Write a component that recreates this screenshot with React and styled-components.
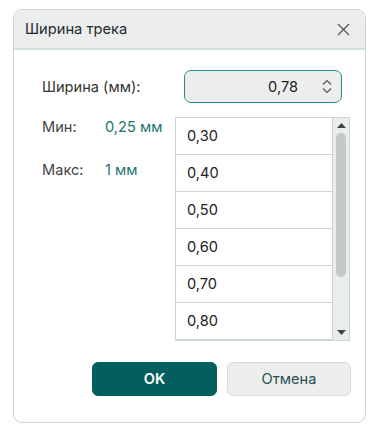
import React from "react";
import styled, { createGlobalStyle } from "styled-components";

const Global = createGlobalStyle`
  html, body { margin: 0; padding: 0; background: #ffffff; }
  body { font-family: Inter, "Noto Sans", "Liberation Sans", sans-serif; color: #2b2b2b; }
  * { box-sizing: border-box; }
`;

const Dialog = styled.div`
  margin: 9px 0 0 13px;
  width: 353px;
  height: 414px;
  border: 1px solid #cfd3d3;
  border-radius: 9px;
  background: #fff;
  display: flex;
  flex-direction: column;
  overflow: hidden;
`;

const Header = styled.div`
  height: 40px;
  flex: none;
  background: #eceeee;
  border-bottom: 2px solid #d3dfdd;
  display: flex;
  align-items: center;
  justify-content: space-between;
  padding: 0 14px 0 11px;
`;

const Title = styled.div`
  font-size: 14.7px;
  color: #1e2a2a;
`;

const Close = styled.button`
  border: 0;
  background: transparent;
  padding: 0;
  width: 16px;
  height: 16px;
  display: flex;
  align-items: center;
  justify-content: center;
  color: #555;
`;

const Body = styled.div`
  padding: 20px 14px 0 28px;
  display: flex;
  flex-direction: column;
`;

const WidthRow = styled.div`
  display: flex;
  align-items: center;
  height: 33px;
`;

const Label = styled.div`
  flex: 1;
  font-size: 14.6px;
  color: #333;
`;

const Spin = styled.div`
  width: 158px;
  height: 33px;
  margin-right: 9px;
  border: 1.5px solid #2a8c88;
  border-radius: 7px;
  background: #eceeee;
  display: flex;
  align-items: center;
  justify-content: flex-end;
  padding-right: 9px;
  gap: 24px;
  font-size: 14.6px;
  color: #222;
`;

const Arrows = styled.div`
  display: flex;
  flex-direction: column;
  gap: 3px;
  color: #555;
`;

const Lower = styled.div`
  margin-top: 14px;
  display: flex;
`;

const Limits = styled.div`
  width: 133px;
  display: grid;
  grid-template-columns: 63px auto;
  row-gap: 25px;
  align-content: start;
  padding-top: 1px;
  font-size: 14.6px;
`;

const LimitLabel = styled.div`
  color: #444;
`;

const LimitValue = styled.div`
  color: #1b7572;
`;

const ListBox = styled.div`
  width: 175px;
  height: 224px;
  border: 1px solid #ccd6d5;
  display: flex;
  overflow: hidden;
`;

const Items = styled.div`
  flex: 1;
  display: flex;
  flex-direction: column;
`;

const Item = styled.div`
  height: 37px;
  flex: none;
  border-bottom: 1px solid #ccd6d5;
  display: flex;
  align-items: center;
  padding-left: 11px;
  font-size: 14.6px;
  color: #222;
`;

const Scroll = styled.div`
  width: 17px;
  flex: none;
  background: #eaeded;
  border-left: 1px solid #ccd6d5;
  display: flex;
  flex-direction: column;
  align-items: center;
`;

const ScrollArrow = styled.div`
  height: 15px;
  display: flex;
  align-items: center;
  justify-content: center;
  color: #444;
`;

const Thumb = styled.div`
  width: 10px;
  height: 144px;
  border-radius: 5px;
  background: #c3cbc9;
`;

const Spacer = styled.div`
  flex: 1;
`;

const Buttons = styled.div`
  margin-top: 21px;
  display: flex;
  justify-content: flex-end;
  gap: 10px;
`;

const Button = styled.button`
  width: ${(p) => (p.$primary ? 125 : 124)}px;
  height: 34px;
  border-radius: 6px;
  font-family: inherit;
  font-size: 14.6px;
  border: 1px solid ${(p) => (p.$primary ? "#035f5d" : "#d6dcdb")};
  background: ${(p) => (p.$primary ? "#035f5d" : "#eceeee")};
  color: ${(p) => (p.$primary ? "#ffffff" : "#2b4f4e")};
  font-weight: ${(p) => (p.$primary ? 600 : 400)};
`;

const values = ["0,30", "0,40", "0,50", "0,60", "0,70", "0,80", ""];

export default function App() {
  return (
    <>
      <Global />
      <Dialog>
        <Header>
          <Title>Ширина трека</Title>
          <Close aria-label="close">
            <svg width="13" height="13" viewBox="0 0 13 13">
              <path d="M1 1L12 12M12 1L1 12" stroke="currentColor" strokeWidth="1.3" fill="none" />
            </svg>
          </Close>
        </Header>
        <Body>
          <WidthRow>
            <Label>Ширина (мм):</Label>
            <Spin>
              <span>0,78</span>
              <Arrows>
                <svg width="10" height="6" viewBox="0 0 10 6">
                  <path d="M1 5.5L5 1.5L9 5.5" stroke="currentColor" strokeWidth="1.2" fill="none" />
                </svg>
                <svg width="10" height="6" viewBox="0 0 10 6">
                  <path d="M1 0.5L5 4.5L9 0.5" stroke="currentColor" strokeWidth="1.2" fill="none" />
                </svg>
              </Arrows>
            </Spin>
          </WidthRow>
          <Lower>
            <Limits>
              <LimitLabel>Мин:</LimitLabel>
              <LimitValue>0,25 мм</LimitValue>
              <LimitLabel>Макс:</LimitLabel>
              <LimitValue>1 мм</LimitValue>
            </Limits>
            <ListBox>
              <Items>
                {values.map((v, i) => (
                  <Item key={i}>{v}</Item>
                ))}
              </Items>
              <Scroll>
                <ScrollArrow>
                  <svg width="9" height="5" viewBox="0 0 9 5">
                    <path d="M0 5L4.5 0L9 5Z" fill="currentColor" />
                  </svg>
                </ScrollArrow>
                <Thumb />
                <Spacer />
                <ScrollArrow>
                  <svg width="9" height="5" viewBox="0 0 9 5">
                    <path d="M0 0L4.5 5L9 0Z" fill="currentColor" />
                  </svg>
                </ScrollArrow>
              </Scroll>
            </ListBox>
          </Lower>
          <Buttons>
            <Button $primary>OK</Button>
            <Button>Отмена</Button>
          </Buttons>
        </Body>
      </Dialog>
    </>
  );
}
